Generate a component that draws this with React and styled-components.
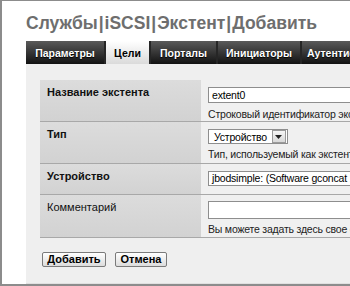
import React from "react";
import styled, { createGlobalStyle } from "styled-components";

const Global = createGlobalStyle`
  html, body { margin: 0; padding: 0; background: #fff; }
  body { font-family: "Liberation Sans", Arial, sans-serif; }
`;

const Frame = styled.div`
  box-sizing: border-box;
  width: 350px;
  height: 286px;
  overflow: hidden;
  border-left: 2px solid #8c8c8c;
  border-top: 1px solid #8c8c8c;
  border-bottom: 2px solid #8c8c8c;
  background: #fff;
  display: flex;
  flex-direction: column;
  padding-left: 24px;
`;

const Title = styled.h1`
  margin: 0;
  height: 40px;
  box-sizing: border-box;
  padding-top: 12px;
  font-size: 17.5px;
  line-height: 20px;
  font-weight: bold;
  color: #6e6e6e;
  white-space: nowrap;
`;

const Pipe = styled.span`
  margin: 0 1px;
`;

const Tabs = styled.div`
  display: flex;
  height: 23px;
  background: linear-gradient(#5a5a5a, #121212);
  white-space: nowrap;
`;

const Tab = styled.div`
  box-sizing: border-box;
  width: ${(p) => p.$w}px;
  flex: none;
  display: flex;
  align-items: center;
  justify-content: center;
  font-size: 10.5px;
  font-weight: bold;
  border-right: 2px solid #262626;
  color: ${(p) => (p.$active ? "#000" : "#fff")};
  text-shadow: ${(p) => (p.$active ? "none" : "0 1px 1px #000")};
  background: ${(p) =>
    p.$active ? "linear-gradient(#ffffff, #dadada)" : "transparent"};
`;

const Panel = styled.div`
  flex: 1;
  background: #efefef;
  padding: 16px 0 0 14px;
  border-bottom: 1px solid #e0e0e0;
`;

const Table = styled.div`
  display: grid;
  grid-template-columns: 161px 200px;
`;

const Label = styled.div`
  box-sizing: border-box;
  height: ${(p) => p.$h}px;
  padding: 5px 7px;
  font-size: 11px;
  line-height: 14px;
  font-weight: ${(p) => (p.$bold ? "bold" : "normal")};
  color: #111;
  background: linear-gradient(#dcdcdc, #d2d2d2);
  border-bottom: 1px solid #a8a8a8;
  white-space: nowrap;
`;

const Value = styled.div`
  box-sizing: border-box;
  height: ${(p) => p.$h}px;
  padding: ${(p) => p.$pt}px 0 0 7px;
  background: #f0f0f0;
  border-bottom: 1px solid #a8a8a8;
  font-size: 10.5px;
  letter-spacing: -0.2px;
  white-space: nowrap;
  overflow: hidden;
`;

const TextInput = styled.div`
  box-sizing: border-box;
  width: 200px;
  height: ${(p) => p.$h}px;
  border: 1px solid #8e8e8e;
  background: #fff;
  line-height: ${(p) => p.$h - 2}px;
  padding-left: 3px;
  color: #000;
`;

const Help = styled.div`
  line-height: 14px;
  color: #222;
  margin-top: ${(p) => p.$mt || 3}px;
`;

const SelectBox = styled.div`
  display: inline-flex;
  align-items: center;
  box-sizing: border-box;
  height: 15px;
  border: 1px solid #8e8e8e;
  background: #fff;
  padding-left: 5px;
  padding-right: 1px;
  color: #000;
`;

const Arrow = styled.span`
  box-sizing: border-box;
  width: 14px;
  height: 13px;
  margin-left: 5px;
  border: 1px solid #9a9a9a;
  background: linear-gradient(#f6f6f6, #d8d8d8);
  display: flex;
  align-items: center;
  justify-content: center;
`;

const Buttons = styled.div`
  display: flex;
  gap: 9px;
  margin-top: 14px;
  padding-left: 2px;
`;

const Button = styled.button`
  box-sizing: border-box;
  height: 15px;
  width: ${(p) => p.$w}px;
  padding: 0;
  font-family: inherit;
  font-size: 11px;
  font-weight: bold;
  color: #000;
  border: 1px solid #7a7a7a;
  border-radius: 2px;
  background: linear-gradient(#ffffff, #dcdcdc);
  line-height: 13px;
`;

export default function App() {
  return (
    <>
      <Global />
      <Frame>
        <Title>
          Службы<Pipe>|</Pipe>iSCSI<Pipe>|</Pipe>Экстент<Pipe>|</Pipe>Добавить
        </Title>
        <Tabs>
          <Tab $w={80}>Параметры</Tab>
          <Tab $w={45} $active>Цели</Tab>
          <Tab $w={67}>Порталы</Tab>
          <Tab $w={84}>Инициаторы</Tab>
          <Tab $w={100}>Аутентификация</Tab>
        </Tabs>
        <Panel>
          <Table>
            <Label $h={42} $bold>Название экстента</Label>
            <Value $h={42} $pt={7}>
              <TextInput $h={16}>extent0</TextInput>
              <Help $mt={4}>Строковый идентификатор экстента</Help>
            </Value>
            <Label $h={42} $bold>Тип</Label>
            <Value $h={42} $pt={7}>
              <SelectBox>
                Устройство
                <Arrow>
                  <svg width="7" height="4" viewBox="0 0 7 4">
                    <path d="M0 0h7L3.5 4z" fill="#222" />
                  </svg>
                </Arrow>
              </SelectBox>
              <Help $mt={3}>Тип, используемый как экстент</Help>
            </Value>
            <Label $h={31} $bold>Устройство</Label>
            <Value $h={31} $pt={7}>
              <TextInput $h={15}>jbodsimple: (Software gconcat 1TB)</TextInput>
            </Value>
            <Label $h={43}>Комментарий</Label>
            <Value $h={43} $pt={6}>
              <TextInput $h={18} />
              <Help $mt={3}>Вы можете задать здесь свое описание</Help>
            </Value>
          </Table>
          <Buttons>
            <Button $w={64}>Добавить</Button>
            <Button $w={52}>Отмена</Button>
          </Buttons>
        </Panel>
      </Frame>
    </>
  );
}
